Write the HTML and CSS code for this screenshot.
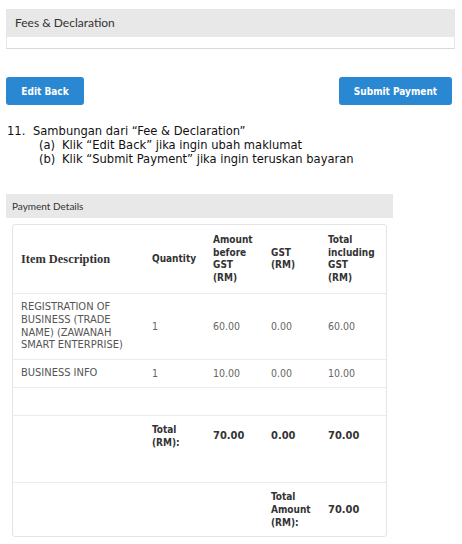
FILE: index.html
```html
<!DOCTYPE html>
<html>
<head>
<meta charset="utf-8">
<link rel="stylesheet" href="styles.css">
</head>
<body>
<div class="page">
  <section class="panel">
    <div class="panel-head">Fees &amp; Declaration</div>
    <div class="panel-body"></div>
  </section>

  <div class="actions">
    <button class="btn btn-edit">Edit Back</button>
    <button class="btn btn-submit">Submit Payment</button>
  </div>

  <div class="notes">
    <div class="note-main"><span class="num">11.</span><span>Sambungan dari “Fee &amp; Declaration”</span></div>
    <div class="note-sub"><span class="sub-num">(a)</span><span>Klik “Edit Back” jika ingin ubah maklumat</span></div>
    <div class="note-sub"><span class="sub-num">(b)</span><span>Klik “Submit Payment” jika ingin teruskan bayaran</span></div>
  </div>

  <section class="payment">
    <div class="payment-head">Payment Details</div>
    <div class="card">
      <table class="tbl">
        <colgroup>
          <col class="c1"><col class="c2"><col class="c3"><col class="c4"><col class="c5">
        </colgroup>
        <thead>
          <tr>
            <th class="th-item">Item Description</th>
            <th>Quantity</th>
            <th>Amount<br>before<br>GST<br>(RM)</th>
            <th>GST<br>(RM)</th>
            <th>Total<br>including<br>GST<br>(RM)</th>
          </tr>
        </thead>
        <tbody>
          <tr class="r1">
            <td class="desc">REGISTRATION OF BUSINESS (TRADE NAME) (ZAWANAH SMART ENTERPRISE)</td>
            <td class="n">1</td>
            <td class="n">60.00</td>
            <td class="n">0.00</td>
            <td class="n">60.00</td>
          </tr>
          <tr class="r2">
            <td class="desc">BUSINESS INFO</td>
            <td class="n">1</td>
            <td class="n">10.00</td>
            <td class="n">0.00</td>
            <td class="n">10.00</td>
          </tr>
          <tr class="r-empty">
            <td></td><td></td><td></td><td></td><td></td>
          </tr>
          <tr class="r-total">
            <td></td>
            <td class="lbl">Total<br>(RM):</td>
            <td class="val">70.00</td>
            <td class="val">0.00</td>
            <td class="val">70.00</td>
          </tr>
          <tr class="r-grand">
            <td></td>
            <td></td>
            <td></td>
            <td class="lbl">Total<br>Amount<br>(RM):</td>
            <td class="val">70.00</td>
          </tr>
        </tbody>
      </table>
    </div>
  </section>
</div>
</body>
</html>
```

FILE: styles.css
```css
html, body {
  margin: 0;
  padding: 0;
  background: #ffffff;
}

.page {
  padding: 9px 7px 0 6px;
  font-family: "DejaVu Sans Condensed", "DejaVu Sans", sans-serif;
  font-stretch: condensed;
}

.panel {
  border: 1px solid #e6e6e6;
  border-top: none;
  border-bottom: 1px solid #d9d9d9;
}

.panel-head {
  background: #e8e8e8;
  height: 28px;
  line-height: 28px;
  padding-left: 8px;
  font-family: Lato, sans-serif;
  font-size: 12px;
  color: #333;
}

.panel-body {
  height: 11px;
}

.actions {
  display: flex;
  justify-content: space-between;
  margin-top: 28px;
  padding-right: 3px;
}

.btn {
  height: 28px;
  border: none;
  border-radius: 3px;
  background: #2a88d2;
  color: #fff;
  font-family: "DejaVu Sans Condensed", "DejaVu Sans", sans-serif;
  font-stretch: condensed;
  font-weight: bold;
  font-size: 10px;
  padding: 0;
}

.btn-edit { width: 78px; }
.btn-submit { width: 113px; }

.notes {
  margin-top: 19px;
  font-size: 12.8px;
  line-height: 14px;
  color: #111;
}

.note-main {
  display: flex;
  padding-left: 1px;
}

.num {
  width: 26px;
}

.note-sub {
  display: flex;
  padding-left: 33px;
}

.sub-num {
  width: 23px;
}

.payment {
  margin-top: 28px;
  width: 387px;
}

.payment-head {
  background: #e8e8e8;
  height: 24px;
  line-height: 24px;
  padding-left: 6px;
  font-family: Lato, sans-serif;
  font-size: 10px;
  color: #333;
}

.card {
  margin: 6px 6px 0 6px;
  border: 1px solid #e4e4e4;
  border-radius: 3px;
}

.tbl {
  width: 100%;
  border-collapse: collapse;
  table-layout: fixed;
}

.c1 { width: 131px; }
.c2 { width: 61px; }
.c3 { width: 58px; }
.c4 { width: 57px; }
.c5 { width: 66px; }

.tbl th {
  text-align: left;
  font-weight: bold;
  font-size: 10px;
  line-height: 12.5px;
  color: #333;
  padding: 9px 8px;
  vertical-align: middle;
  height: 50px;
}

.tbl th.th-item {
  font-family: "Liberation Serif", serif;
  font-size: 12.4px;
}

.tbl td {
  padding: 7px 8px;
  border-top: 1px solid #ebebeb;
  vertical-align: middle;
  font-size: 11px;
  line-height: 12.7px;
  color: #555;
}

.tbl td.n {
  font-size: 10.5px;
  color: #666;
}

.r1 td { height: 51px; }
.r2 td { height: 13px; }
.r-empty td { height: 13px; }

.r-total td {
  height: 52px;
  vertical-align: top;
  padding-top: 7px;
}

.tbl td.lbl {
  font-weight: bold;
  font-size: 10px;
  color: #333;
  line-height: 13px;
}

.tbl td.val {
  font-weight: bold;
  color: #333;
  font-size: 11px;
  line-height: 26px;
}

.r-grand td {
  height: 36px;
  vertical-align: middle;
}

.r-grand td.val {
  line-height: 13px;
}
```
